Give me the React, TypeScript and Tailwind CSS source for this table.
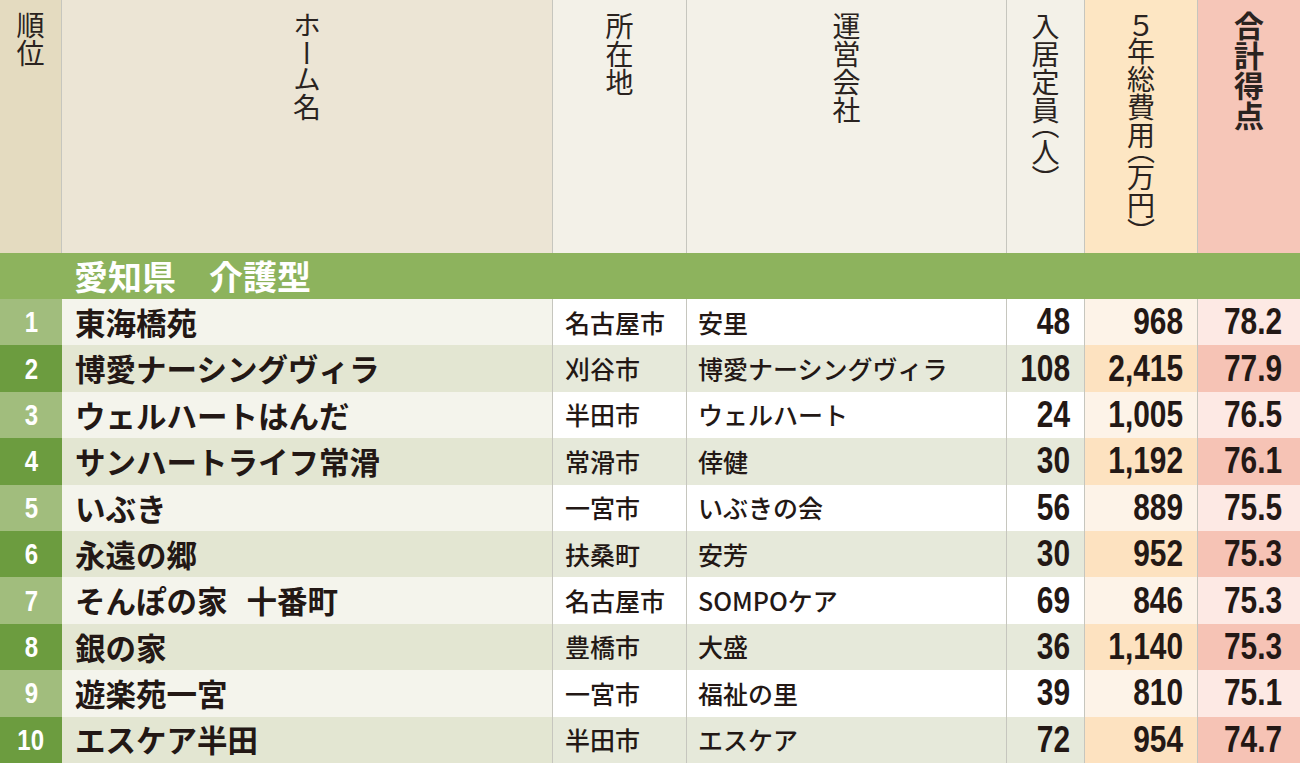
import React from 'react';

type Row = {
  rank: number;
  name: React.ReactNode;
  city: string;
  company: string;
  capacity: string;
  cost: string;
  score: string;
};

const rows: Row[] = [
  { rank: 1, name: '東海橋苑', city: '名古屋市', company: '安里', capacity: '48', cost: '968', score: '78.2' },
  { rank: 2, name: '博愛ナーシングヴィラ', city: '刈谷市', company: '博愛ナーシングヴィラ', capacity: '108', cost: '2,415', score: '77.9' },
  { rank: 3, name: 'ウェルハートはんだ', city: '半田市', company: 'ウェルハート', capacity: '24', cost: '1,005', score: '76.5' },
  { rank: 4, name: 'サンハートライフ常滑', city: '常滑市', company: '倖健', capacity: '30', cost: '1,192', score: '76.1' },
  { rank: 5, name: 'いぶき', city: '一宮市', company: 'いぶきの会', capacity: '56', cost: '889', score: '75.5' },
  { rank: 6, name: '永遠の郷', city: '扶桑町', company: '安芳', capacity: '30', cost: '952', score: '75.3' },
  {
    rank: 7,
    name: (
      <>
        そんぽの家<span className="inline-block w-[19px]" />十番町
      </>
    ),
    city: '名古屋市',
    company: 'SOMPOケア',
    capacity: '69',
    cost: '846',
    score: '75.3',
  },
  { rank: 8, name: '銀の家', city: '豊橋市', company: '大盛', capacity: '36', cost: '1,140', score: '75.3' },
  { rank: 9, name: '遊楽苑一宮', city: '一宮市', company: '福祉の里', capacity: '39', cost: '810', score: '75.1' },
  { rank: 10, name: 'エスケア半田', city: '半田市', company: 'エスケア', capacity: '72', cost: '954', score: '74.7' },
];

const cols = 'grid grid-cols-[62px_491px_134px_320px_78px_113px_102px]';
const line = 'border-r border-[#c6c6be]';

const VHead = ({ text, bold }: { text: string; bold?: boolean }) => (
  <div
    className={`[writing-mode:vertical-rl] [font-feature-settings:'vpal'] leading-none text-[#2a2320] ${
      bold ? 'text-[30px] font-bold' : 'text-[28px] font-normal'
    }`}
  >
    {text}
  </div>
);

const Num = ({ value, white }: { value: string; white?: boolean }) => (
  <span
    className={`inline-block font-['Liberation_Sans',sans-serif] font-bold leading-none ${
      white
        ? 'text-[30px] text-white origin-center scale-x-[0.8]'
        : 'text-[36px] text-[#231815] origin-right scale-x-[0.83]'
    }`}
  >
    {value}
  </span>
);

export default function App() {
  return (
    <div className="w-[1300px] h-[763px] overflow-hidden bg-white font-['Noto_Sans_CJK_JP',sans-serif]">
      {/* header */}
      <div className={`${cols} h-[253px]`}>
        <div className={`bg-[#e4dbc0] ${line} flex justify-center pt-[11px]`}>
          <VHead text="順位" />
        </div>
        <div className={`bg-[#ece5d5] ${line} flex justify-center pt-[12px]`}>
          <VHead text="ホーム名" />
        </div>
        <div className={`bg-[#f3f1e8] ${line} flex justify-center pt-[12px]`}>
          <VHead text="所在地" />
        </div>
        <div className={`bg-[#f3f1e8] ${line} flex justify-center pt-[12px]`}>
          <VHead text="運営会社" />
        </div>
        <div className={`bg-[#f3f1e8] ${line} flex justify-center pt-[12px]`}>
          <VHead text="入居定員（人）" />
        </div>
        <div className={`bg-[#fde6c3] ${line} flex justify-center pt-[12px]`}>
          <VHead text="５年総費用（万円）" />
        </div>
        <div className="bg-[#f6c6b8] flex justify-center pt-[11px]">
          <VHead text="合計得点" bold />
        </div>
      </div>

      {/* group band */}
      <div className="h-[46px] bg-[#8db35d] flex items-center pl-[74px]">
        <span className="text-[34px] font-bold text-white leading-none">
          愛知県<span className="inline-block w-[33px]" />介護型
        </span>
      </div>

      {/* rows */}
      {rows.map((r, i) => {
        const even = i % 2 === 1;
        return (
          <div key={r.rank} className={`${cols} h-[46.4px]`}>
            <div className={`${even ? 'bg-[#6c9c3f]' : 'bg-[#a1bd7d]'} flex items-center justify-center`}>
              <Num value={String(r.rank)} white />
            </div>
            <div className={`${even ? 'bg-[#e3e6d2]' : 'bg-[#f4f4ec]'} ${line} flex items-center pl-[13px]`}>
              <span className="text-[30.5px] font-bold leading-none text-[#231815]">{r.name}</span>
            </div>
            <div className={`${even ? 'bg-[#e6e9da]' : 'bg-white'} ${line} flex items-center pl-[12px]`}>
              <span className="text-[25px] font-medium leading-none text-[#231815]">{r.city}</span>
            </div>
            <div className={`${even ? 'bg-[#e6e9da]' : 'bg-white'} ${line} flex items-center pl-[11px]`}>
              <span className="text-[25px] font-medium leading-none text-[#231815]">{r.company}</span>
            </div>
            <div className={`${even ? 'bg-[#e6e9da]' : 'bg-white'} ${line} flex items-center justify-end pr-[14px]`}>
              <Num value={r.capacity} />
            </div>
            <div className={`${even ? 'bg-[#fde2c0]' : 'bg-[#fdf3e8]'} ${line} flex items-center justify-end pr-[14px]`}>
              <Num value={r.cost} />
            </div>
            <div className={`${even ? 'bg-[#f6c3b5]' : 'bg-[#fde9e4]'} flex items-center justify-end pr-[18px]`}>
              <Num value={r.score} />
            </div>
          </div>
        );
      })}
    </div>
  );
}
